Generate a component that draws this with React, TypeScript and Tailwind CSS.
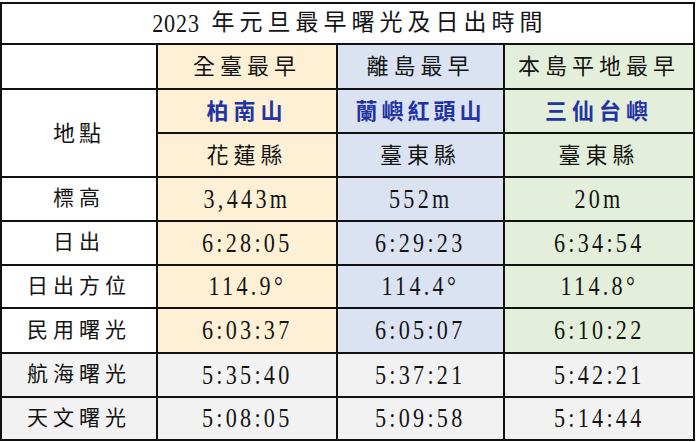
const cjk = "font-['Liberation_Serif','Noto_Sans_CJK_TC',serif]";

type Row = { label: string; values: string[]; grey?: boolean };

const rows: Row[] = [
  { label: "標高", values: ["3,443m", "552m", "20m"] },
  { label: "日出", values: ["6:28:05", "6:29:23", "6:34:54"] },
  { label: "日出方位", values: ["114.9°", "114.4°", "114.8°"] },
  { label: "民用曙光", values: ["6:03:37", "6:05:07", "6:10:22"] },
  { label: "航海曙光", values: ["5:35:40", "5:37:21", "5:42:21"], grey: true },
  { label: "天文曙光", values: ["5:08:05", "5:09:58", "5:14:44"], grey: true },
];

const colBg = ["bg-[#fdf0d4]", "bg-[#dbe3f2]", "bg-[#e3efda]"];

function Cell({ className, children }: { className?: string; children?: React.ReactNode }) {
  return <div className={`flex items-center justify-center ${className ?? ""}`}>{children}</div>;
}

export default function App() {
  return (
    <main className={`min-h-screen bg-white pt-[2px] ${cjk} text-[#141414]`}>
      <div className="grid w-[695px] grid-cols-[154px_178px_165px_188px] grid-rows-[39px_43px_42px_42px_42px_42px_41px_43px_42px_41px] gap-[2px] border-2 border-[#111] bg-[#111]">
        <Cell className="col-span-4 bg-white text-[23px] tracking-[5px]">
          <span className="inline-block origin-center scale-x-[0.85] text-[26px] tracking-[1px]">2023</span>
          <span className="ml-[8px]">年元旦最早曙光及日出時間</span>
        </Cell>

        <Cell className="bg-white" />
        <Cell className={`${colBg[0]} text-[22px] tracking-[5px]`}>全臺最早</Cell>
        <Cell className={`${colBg[1]} text-[22px] tracking-[5px]`}>離島最早</Cell>
        <Cell className={`${colBg[2]} text-[22px] tracking-[5px]`}>本島平地最早</Cell>

        <Cell className="row-span-2 bg-white text-[22px] tracking-[4px]">地點</Cell>
        <Cell className={`${colBg[0]} text-[22px] font-bold tracking-[5px] text-[#2233a3]`}>柏南山</Cell>
        <Cell className={`${colBg[1]} text-[22px] font-bold tracking-[4px] text-[#2233a3]`}>蘭嶼紅頭山</Cell>
        <Cell className={`${colBg[2]} text-[22px] font-bold tracking-[5px] text-[#2233a3]`}>三仙台嶼</Cell>
        <Cell className={`${colBg[0]} text-[22px] tracking-[5px]`}>花蓮縣</Cell>
        <Cell className={`${colBg[1]} text-[22px] tracking-[5px]`}>臺東縣</Cell>
        <Cell className={`${colBg[2]} text-[22px] tracking-[5px]`}>臺東縣</Cell>

        {rows.map((r) => (
          <div key={r.label} className="contents">
            <Cell className={`${r.grey ? "bg-[#f2f2f2]" : "bg-white"} text-[21px] tracking-[5px]`}>{r.label}</Cell>
            {r.values.map((v, i) => (
              <Cell key={i} className={r.grey ? "bg-[#f2f2f2]" : colBg[i]}>
                <span className="inline-block origin-center scale-x-[0.82] text-[27px] tracking-[4px]">{v}</span>
              </Cell>
            ))}
          </div>
        ))}
      </div>
    </main>
  );
}
